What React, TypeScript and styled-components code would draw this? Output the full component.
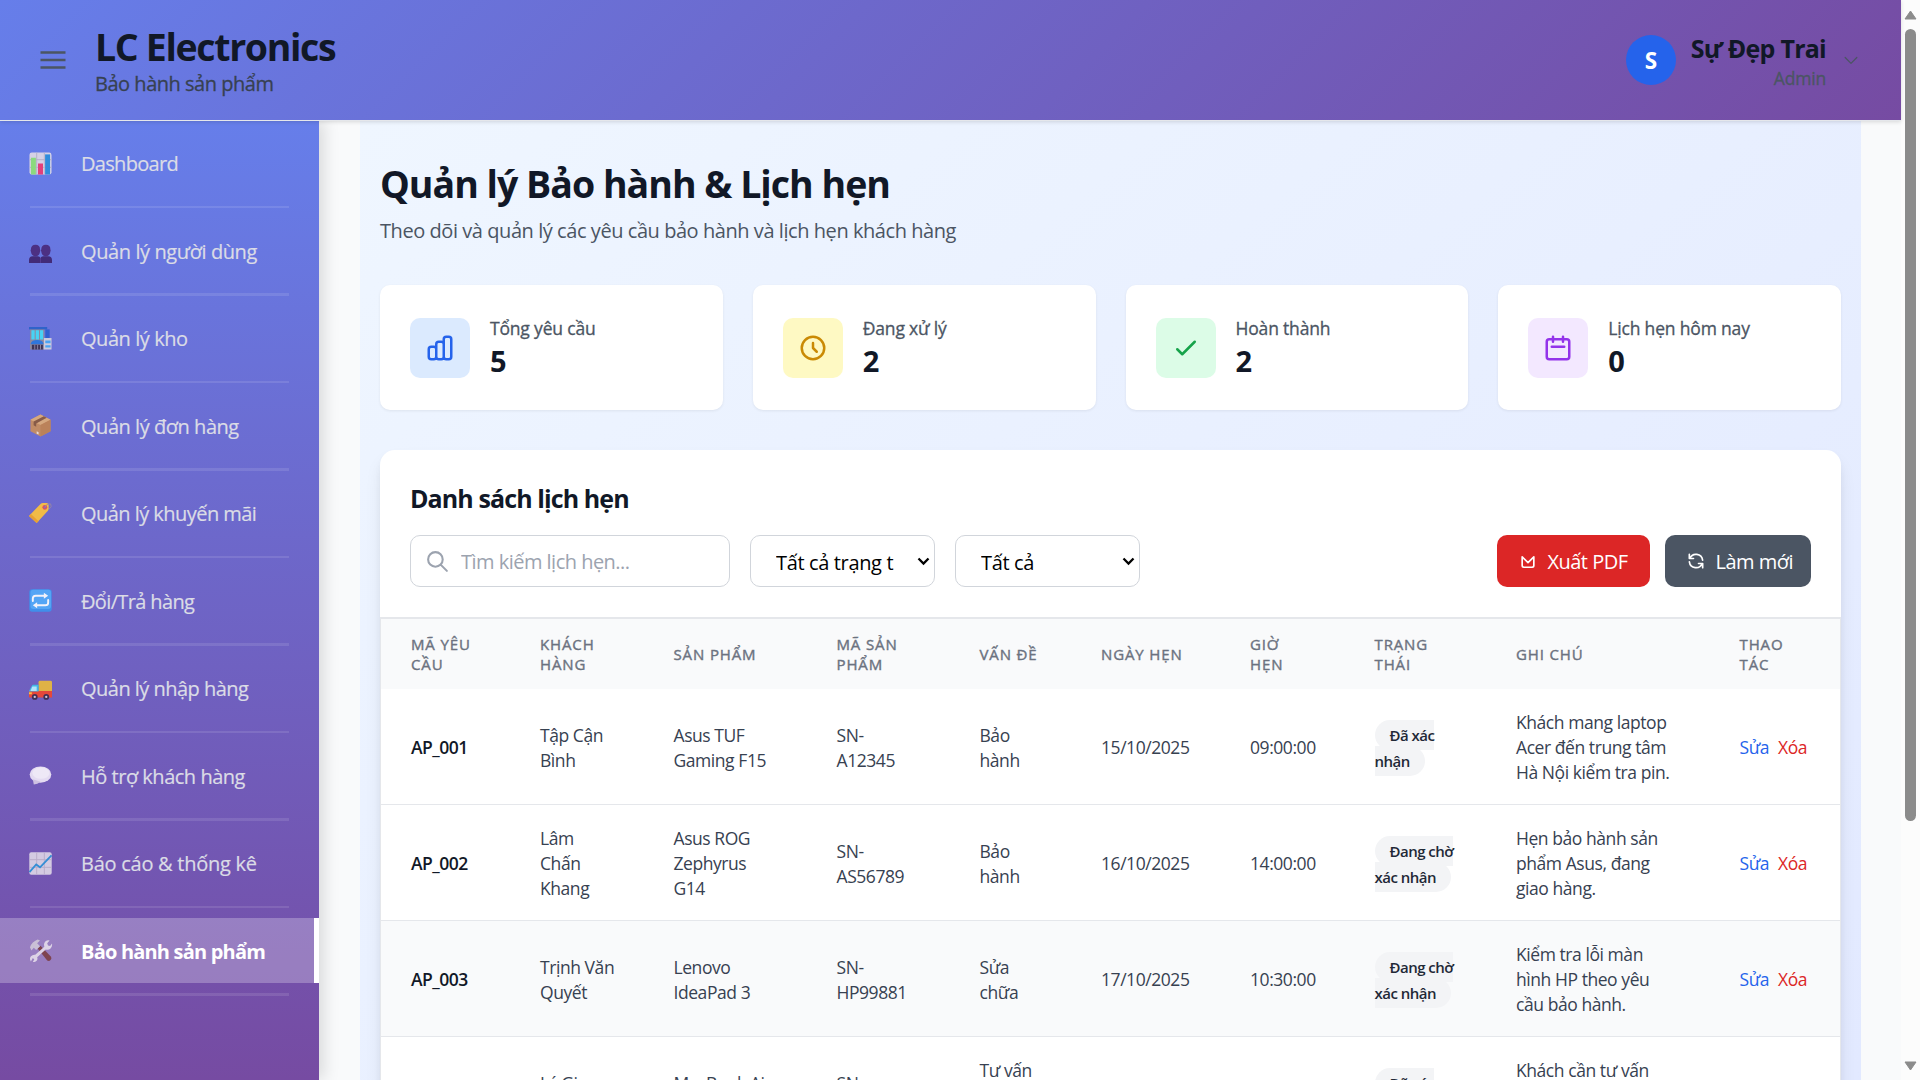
import React from "react";
import styled, { createGlobalStyle, css } from "styled-components";

const GlobalStyle = createGlobalStyle`
  *, *::before, *::after { box-sizing: border-box; }
  html, body { margin: 0; padding: 0; height: 1080px; overflow: hidden; }
  body {
    font-family: "Segoe UI", "Open Sans", "Noto Sans", sans-serif;
    font-size: 20px;
    line-height: 30px;
    letter-spacing: -0.022em;
    color: #111827;
    background: #f9fafb;
  }
  h1, h2, p { margin: 0; }
  button, input { font: inherit; letter-spacing: inherit; }
`;

const medium = css`
  font-weight: 400;
  -webkit-text-stroke: 0.3px currentColor;
`;

/* ---------- shell ---------- */

const Screen = styled.div`
  display: flex;
  width: 1920px;
  height: 1080px;
  overflow: hidden;
`;

const Page = styled.div`
  display: flex;
  flex-direction: column;
  flex: 1;
  min-width: 0;
`;

const Body = styled.div`
  display: flex;
  flex: 1;
  min-height: 0;
`;

const ScrollTrack = styled.div`
  display: flex;
  flex-direction: column;
  align-items: center;
  width: 19px;
  padding: 10px 0 9px;
  background: #fcfcfc;
`;

const ScrollThumb = styled.div`
  width: 11px;
  height: 792px;
  margin: 9px 0 auto;
  border-radius: 6px;
  background: #8b8b8b;
`;

/* ---------- header ---------- */

const Header = styled.header`
  display: flex;
  align-items: center;
  flex: none;
  height: 121px;
  padding: 0 40px 0 37.5px;
  background: linear-gradient(135deg, #667eea 0%, #764ba2 100%);
  border-bottom: 1px solid #e5e7eb;
  box-shadow: 0 1px 4px rgba(0, 0, 0, 0.14);
  position: relative;
  z-index: 2;
`;

const MenuButton = styled.button`
  display: flex;
  padding: 0;
  margin-right: 27.5px;
  border: 0;
  background: none;
  color: #4b5563;
`;

const Brand = styled.div`
  flex: 1;
  padding-top: 3px;
`;

const BrandName = styled.h1`
  font-size: 37.5px;
  line-height: 45px;
  font-weight: 700;
  letter-spacing: -0.036em;
`;

const BrandSub = styled.p`
  ${medium}
  color: #374151;
  letter-spacing: -0.024em;
`;

const User = styled.div`
  display: flex;
  align-items: center;
  color: #4b5563;
`;

const Avatar = styled.div`
  display: flex;
  align-items: center;
  justify-content: center;
  width: 50px;
  height: 50px;
  padding-top: 1px;
  margin-right: 15px;
  border-radius: 50%;
  background: #2563eb;
  color: #fff;
  font-size: 22.5px;
  font-weight: 700;
`;

const UserText = styled.div`
  padding-top: 2px;
  margin-right: 15px;
  text-align: right;
`;

const UserName = styled.div`
  font-size: 25px;
  line-height: 35px;
  font-weight: 700;
  letter-spacing: -0.03em;
  color: #111827;
`;

const UserRole = styled.div`
  ${medium}
  font-size: 17.5px;
  line-height: 25px;
  letter-spacing: -0.01em;
`;

/* ---------- sidebar ---------- */

const Sidebar = styled.nav`
  flex: none;
  width: 319px;
  padding-top: 9.5px;
  background: linear-gradient(180deg, #667eea 0%, #764ba2 100%);
  box-shadow: 5px 0 15px rgba(0, 0, 0, 0.13);
  position: relative;
  z-index: 1;
`;

const NavItem = styled.a<{ $active?: boolean; $tracking: number }>`
  display: grid;
  grid-template-columns: 52px 1fr;
  align-items: center;
  height: 65px;
  padding-left: 29px;
  border-right: 5px solid ${(p) => (p.$active ? "#fff" : "transparent")};
  background: ${(p) => (p.$active ? "rgba(255, 255, 255, 0.26)" : "none")};
  background-clip: padding-box;
  color: ${(p) => (p.$active ? "#fff" : "#dbdce6")};
  font-weight: ${(p) => (p.$active ? 700 : 400)};
  letter-spacing: ${(p) => p.$tracking}em;
  -webkit-text-stroke: ${(p) => (p.$active ? "0" : "0.2px currentColor")};
  white-space: nowrap;
`;

const NavLabel = styled.span`
  padding-top: 2px;
`;

const NavRule = styled.div`
  height: 2.5px;
  margin: 10px 30px;
  background: rgba(255, 255, 255, 0.11);
`;

const NavGlyph = styled.svg`
  width: 23px;
  height: 23px;
  opacity: 0.92;
  overflow: visible;
`;

/* ---------- content ---------- */

const Main = styled.main`
  flex: 1;
  min-width: 0;
  padding: 0 40px 0 41px;
`;

const Canvas = styled.div`
  height: 1290px;
  padding: 40px 20px;
  background: linear-gradient(to bottom right, #eff6ff, #e0e7ff);
`;

const PageTitle = styled.h1`
  font-size: 37.5px;
  line-height: 45px;
  font-weight: 700;
  letter-spacing: -0.0265em;
`;

const PageSub = styled.p`
  margin: 10px 0 39px;
  color: #4b5563;
`;

const Stats = styled.div`
  display: grid;
  grid-template-columns: repeat(4, 1fr);
  gap: 30px;
`;

const StatCard = styled.section`
  display: flex;
  align-items: center;
  gap: 20px;
  height: 125px;
  padding: 0 30px;
  border-radius: 10px;
  background: #fff;
  box-shadow: 0 1px 3px rgba(0, 0, 0, 0.07);
`;

const StatIcon = styled.div<{ $bg: string; $fg: string }>`
  display: flex;
  align-items: center;
  justify-content: center;
  width: 60px;
  height: 60px;
  border-radius: 10px;
  background: ${(p) => p.$bg};
  color: ${(p) => p.$fg};
`;

const StatText = styled.div`
  padding-top: 2px;
`;

const StatLabel = styled.div`
  ${medium}
  font-size: 17.5px;
  line-height: 25px;
  letter-spacing: -0.01em;
  color: #4b5563;
`;

const StatValue = styled.div`
  font-size: 29px;
  line-height: 40px;
  font-weight: 700;
`;

const Panel = styled.section`
  margin-top: 40px;
  border-radius: 15px;
  background: #fff;
  box-shadow: 0 10px 18px -3px rgba(0, 0, 0, 0.1), 0 4px 8px -3px rgba(0, 0, 0, 0.08);
`;

const PanelHead = styled.div`
  padding: 31px 30px 30px;
`;

const PanelTitle = styled.h2`
  font-size: 25px;
  line-height: 35px;
  font-weight: 700;
  letter-spacing: -0.036em;
`;

const Toolbar = styled.div`
  display: flex;
  gap: 20px;
  margin-top: 19px;
`;

const field = css`
  display: flex;
  align-items: center;
  height: 52px;
  border: 1px solid #d1d5db;
  border-radius: 10px;
  background: #fff;
`;

const SearchField = styled.label`
  ${field}
  width: 320px;
  padding-left: 14px;
  gap: 11px;
  color: #9ca3af;
`;

const SearchInput = styled.input`
  flex: 1;
  min-width: 0;
  padding: 2px 0 0;
  border: 0;
  outline: 0;
  background: none;
  letter-spacing: -0.026em;
  &::placeholder { color: #9ca3af; opacity: 1; }
`;

const SelectField = styled.div`
  ${field}
  width: 185px;
  padding: 0 4px 0 25px;
  color: #000;
  justify-content: space-between;
`;

const SelectValue = styled.span`
  width: 120px;
  padding-top: 4px;
  overflow: hidden;
  letter-spacing: -0.018em;
  white-space: nowrap;
`;

const Actions = styled.div`
  display: flex;
  gap: 15px;
  margin-left: auto;
`;

const ActionButton = styled.button<{ $bg: string; $w: number }>`
  display: flex;
  align-items: center;
  gap: 10px;
  width: ${(p) => p.$w}px;
  height: 52px;
  padding: 0 0 0 20.5px;
  border: 0;
  border-radius: 10px;
  background: ${(p) => p.$bg};
  color: #fff;
  white-space: nowrap;
`;

const ActionLabel = styled.span`
  padding-top: 2px;
  letter-spacing: -0.026em;
`;

/* ---------- table ---------- */

const TableFrame = styled.div`
  border: 1px solid #e5e7eb;
  border-top-width: 2px;
`;

const Table = styled.table`
  width: 100%;
  table-layout: fixed;
  border-collapse: separate;
  border-spacing: 0;
`;

const Th = styled.th`
  height: 70px;
  padding: 15px 0 15px 30px;
  background: #f9fafb;
  color: #6b7280;
  font-size: 15px;
  line-height: 20px;
  font-weight: 400;
  -webkit-text-stroke: 0.4px currentColor;
  letter-spacing: 0.058em;
  text-align: left;
  text-transform: uppercase;
  white-space: pre-line;
`;

const Tr = styled.tr<{ $shaded?: boolean }>`
  background: ${(p) => (p.$shaded ? "#f9fafb" : "#fff")};
`;

const Td = styled.td<{ $strong?: boolean }>`
  height: 116px;
  padding: 21px 0 19px 30px;
  border-bottom: 1px solid #e5e7eb;
  font-size: 17.5px;
  line-height: 25px;
  color: ${(p) => (p.$strong ? "#111827" : "#374151")};
  font-weight: ${(p) => (p.$strong ? 600 : 400)};
  letter-spacing: ${(p) => (p.$strong ? "-0.028em" : "-0.025em")};
  white-space: pre-line;
`;

const Badge = styled.span`
  padding: 5px 15px;
  border-radius: 999px;
  background: #f3f4f6;
  color: #1f2937;
  font-size: 15px;
  font-weight: 600;
  letter-spacing: -0.035em;
`;

const RowLink = styled.a<{ $danger?: boolean }>`
  margin-right: 9px;
  color: ${(p) => (p.$danger ? "#dc2626" : "#2563eb")};
`;

/* ---------- data ---------- */

type Glyph = "chart" | "people" | "store" | "box" | "tag" | "repeat" | "truck" | "chat" | "trend" | "tools";

const nav: { glyph: Glyph; label: string; tracking: number; active?: boolean }[] = [
  { glyph: "chart", label: "Dashboard", tracking: -0.034 },
  { glyph: "people", label: "Quản lý người dùng", tracking: -0.02 },
  { glyph: "store", label: "Quản lý kho", tracking: -0.022 },
  { glyph: "box", label: "Quản lý đơn hàng", tracking: -0.023 },
  { glyph: "tag", label: "Quản lý khuyến mãi", tracking: -0.027 },
  { glyph: "repeat", label: "Đổi/Trả hàng", tracking: -0.032 },
  { glyph: "truck", label: "Quản lý nhập hàng", tracking: -0.026 },
  { glyph: "chat", label: "Hỗ trợ khách hàng", tracking: -0.024 },
  { glyph: "trend", label: "Báo cáo & thống kê", tracking: -0.013 },
  { glyph: "tools", label: "Bảo hành sản phẩm", tracking: -0.04, active: true },
];

const stats = [
  { label: "Tổng yêu cầu", value: 5, bg: "#dbeafe", fg: "#2563eb", d: "M9 19v-6a2 2 0 00-2-2H5a2 2 0 00-2 2v6a2 2 0 002 2h2a2 2 0 002-2zm0 0V9a2 2 0 012-2h2a2 2 0 012 2v10m-6 0a2 2 0 002 2h2a2 2 0 002-2m0 0V5a2 2 0 012-2h2a2 2 0 012 2v14a2 2 0 01-2 2h-2a2 2 0 01-2-2z" },
  { label: "Đang xử lý", value: 2, bg: "#fef9c3", fg: "#ca8a04", d: "M12 8v4l3 3m6-3a9 9 0 11-18 0 9 9 0 0118 0z" },
  { label: "Hoàn thành", value: 2, bg: "#dcfce7", fg: "#16a34a", d: "M5 13l4 4L19 7" },
  { label: "Lịch hẹn hôm nay", value: 0, bg: "#f3e8ff", fg: "#9333ea", d: "M8 7V3m8 4V3m-9 8h10M5 21h14a2 2 0 002-2V7a2 2 0 00-2-2H5a2 2 0 00-2 2v12a2 2 0 002 2z" },
];

const columns: [string, number][] = [
  ["Mã yêu\ncầu", 129],
  ["Khách\nhàng", 133.5],
  ["Sản phẩm", 163],
  ["Mã sản\nphẩm", 143],
  ["Vấn đề", 121.5],
  ["Ngày hẹn", 149],
  ["Giờ\nhẹn", 124.5],
  ["Trạng\nthái", 141.5],
  ["Ghi chú", 223.5],
  ["Thao\ntác", 130.5],
];

const rows = [
  { id: "AP_001", who: "Tập Cận\nBình", product: "Asus TUF\nGaming F15", serial: "SN-\nA12345", issue: "Bảo\nhành", date: "15/10/2025", time: "09:00:00", status: "Đã xác\nnhận", note: "Khách mang laptop\nAcer đến trung tâm\nHà Nội kiểm tra pin." },
  { id: "AP_002", who: "Lâm\nChấn\nKhang", product: "Asus ROG\nZephyrus\nG14", serial: "SN-\nAS56789", issue: "Bảo\nhành", date: "16/10/2025", time: "14:00:00", status: "Đang chờ\nxác nhận", note: "Hẹn bảo hành sản\nphẩm Asus, đang\ngiao hàng." },
  { id: "AP_003", who: "Trịnh Văn\nQuyết", product: "Lenovo\nIdeaPad 3", serial: "SN-\nHP99881", issue: "Sửa\nchữa", date: "17/10/2025", time: "10:30:00", status: "Đang chờ\nxác nhận", note: "Kiểm tra lỗi màn\nhình HP theo yêu\ncầu bảo hành.", shaded: true },
  { id: "AP_004", who: "Lý Gia\nThành", product: "MacBook Air\nM2", serial: "SN-\nMB22334", issue: "Tư vấn\nsản\nphẩm", date: "18/10/2025", time: "15:00:00", status: "Đã xác\nnhận", note: "Khách cần tư vấn\nnâng cấp bộ\nnhớ." },
];

/* ---------- drawings ---------- */

function LineIcon({ d, size, weight = 2 }: { d: string; size: number; weight?: number }) {
  return (
    <svg width={size} height={size} viewBox="0 0 24 24" fill="none" stroke="currentColor" strokeWidth={weight} strokeLinecap="round" strokeLinejoin="round">
      <path d={d} />
    </svg>
  );
}

const glyphs: Record<Glyph, React.ReactNode> = {
  chart: (
    <>
      <rect x="0.5" y="0.5" width="23" height="23" rx="2.5" fill="#e0d9e6" />
      <path d="M8 .5v23M16 .5v23M.5 8h23M.5 16h23" stroke="#bcb4c6" strokeWidth="1" />
      <rect x="2" y="6" width="5.2" height="17.5" fill="#8fe276" />
      <rect x="9.4" y="12" width="5.2" height="11.5" fill="#ed3a72" />
      <rect x="16.8" y="2.5" width="5.2" height="21" fill="#2b8fdc" />
    </>
  ),
  people: (
    <g fill="#4a2b7c" transform="translate(0 3)">
      <path d="M2 8q0-5 4.8-5T11.5 8q.6 1 0 2-.6 5-4.7 5T2 10q-.6-1 0-2z" />
      <path d="M12.8 8q0-5 4.8-5t4.7 5q.6 1 0 2-.6 5-4.7 5t-4.8-5q-.6-1 0-2z" />
      <path d="M0 22v-3q0-4 4-4h5q3 0 3 3 0-3 3-3h5q4 0 4 4v3z" fill="#3f2570" />
      <path d="M12 17v5" stroke="#5b3c93" strokeWidth=".8" />
    </g>
  ),
  store: (
    <>
      <rect x="1" y="1" width="15" height="22.5" fill="#8f8a9c" />
      <path d="M0 0h19v2.5H0z" fill="#2b62c9" />
      <path d="M2.5 3.5h3.4V13H2.5zM7 3.5h3.4V13H7zM11.5 3.5h3.3V13h-3.3z" fill="#45dcf7" />
      <path d="M17 2.5h4.5v9H17z" fill="#2c5fd0" />
      <path d="M1.5 18q1-4.5 7-4.5t7 4.5z" fill="#2a77dd" />
      <path d="M3 18.5h11.5v5H3z" fill="#3a2f4e" />
      <path d="M6 18.5v5M9 18.5v5M12 18.5v5" stroke="#9a93a8" strokeWidth=".9" />
      <rect x="15.5" y="11.5" width="8" height="12" fill="#d6d2de" />
      <path d="M17 14h5.5v3H17zM17 19h5.5v2.5H17z" fill="#49a9f5" />
    </>
  ),
  box: (
    <>
      <path d="M12 .5l10.500 5.500v12L12 23.500 1.500 18V6z" fill="#c98f5d" />
      <path d="M12 .5L22.500 6 12 11.500 1.500 6z" fill="#dfad78" />
      <path d="M12 11.500L22.500 6v12L12 23.500z" fill="#c28450" />
      <path d="M15.500 2.300l3 1.600-11 6v3.300L4.800 11.700V7.900z" fill="#8a5a3d" />
      <path d="M8 18l2 1v2.500l-2-1z" fill="#f3e3d6" />
    </>
  ),
  tag: (
    <>
      <path d="M0 14.500L12 2q1-1 2.500-1h4q2 0 2 2v4q0 1.500-1 2.500L8 22z" fill="#fdc23c" />
      <path d="M0 14.500L8 22l2-2-8-7.500z" fill="#f2a529" />
      <circle cx="16.500" cy="5.600" r="2.500" fill="#e2545a" />
      <circle cx="16.500" cy="5.600" r="1" fill="#7a6bd0" />
      <path d="M16.500 5.500q2-4.500 6-3.500 2 2.500-1.500 5.500" fill="none" stroke="#9a8aa0" strokeWidth="1" />
    </>
  ),
  repeat: (
    <>
      <rect x=".3" y=".3" width="23.400" height="23.400" rx="3" fill="#3d93ee" />
      <rect x="1.500" y=".8" width="21.500" height="20" rx="3" fill="#52abfa" />
      <path d="M4 12.500V10q0-3 3-3h9.500M20 11.500V14q0 3-3 3H7.500" fill="none" stroke="#fff" strokeWidth="2" strokeLinecap="round" />
      <path d="M15.500 3.800L20 7l-4.500 3.200zM8.500 13.800L4 17l4.500 3.200z" fill="#fff" />
    </>
  ),
  truck: (
    <g transform="translate(0 1.500)">
      <rect x="10" y="2.500" width="14" height="12.500" rx="1.500" fill="#e9b93c" />
      <path d="M0 19v-6l3-5.500q.5-1 1.500-1H10V19z" fill="#3fc0ea" />
      <path d="M3.500 8.500H8V13H1.500z" fill="#b8f0ff" />
      <path d="M0 13.500h10V13h14v7H1q-1 0-1-1z" fill="#f0452f" />
      <path d="M0 14.500h3v2H0z" fill="#ffc83d" />
      <circle cx="6" cy="19.300" r="3" fill="#3a2b4c" />
      <circle cx="18" cy="19.300" r="3" fill="#3a2b4c" />
      <circle cx="6" cy="19.300" r="1.200" fill="#d8d0e0" />
      <circle cx="18" cy="19.300" r="1.200" fill="#d8d0e0" />
    </g>
  ),
  chat: (
    <g transform="translate(0 1)">
      <ellipse cx="12" cy="10" rx="11.300" ry="8.500" fill="#eee6f6" />
      <path d="M4 15l1 5.500q4-.5 7-3z" fill="#d6cae6" />
      <ellipse cx="12.500" cy="8.500" rx="9" ry="6" fill="#f9f5fc" />
    </g>
  ),
  trend: (
    <>
      <rect x=".3" y=".3" width="23.400" height="23.400" rx="2" fill="#ddd5e6" />
      <path d="M8 .5v23M16 .5v23M.5 8h23M.5 16h23" stroke="#bfb5cc" strokeWidth="1" />
      <path d="M.5 21l7-8 4 3L23.500 3.500" fill="none" stroke="#2f93d8" strokeWidth="1.900" />
    </>
  ),
  tools: (
    <>
      <path d="M9 10l3-3 11 11.500q1 2-.5 3.500t-3.500.5z" fill="#7c3f46" />
      <path d="M1 8.500Q3 3 9 .5l2.500 1L8.500 4.500l3 3-4 4-2.500-2.500L2.500 12z" fill="#cfc6d8" />
      <path d="M2 23.500q-2-3 0-5.500 2-2 4.500-1.500L16 8q-1-3.500 1-5.500 2-1.500 4.500-1L19 4.500l.8 2.200L22 7.300l2-2.500q.5 3-1.500 5T17.500 11L8.500 19q1 2.500-.8 4t-3.700.7l1.500-2.400-1.500-1.500z" fill="#e3dbea" />
    </>
  ),
};

function Caret() {
  return (
    <svg width="13" height="10" viewBox="0 0 13 10" fill="none" stroke="#000" strokeWidth="2.300">
      <path d="M1.500 2.500l5 5 5-5" />
    </svg>
  );
}

export default function App() {
  return (
    <Screen>
      <GlobalStyle />
      <Page>
        <Header>
          <MenuButton aria-label="Menu">
            <svg width="30" height="30" viewBox="0 0 24 24" stroke="currentColor" strokeWidth="2">
              <path d="M2 6h20M2 12h20M2 18h20" />
            </svg>
          </MenuButton>
          <Brand>
            <BrandName>LC Electronics</BrandName>
            <BrandSub>Bảo hành sản phẩm</BrandSub>
          </Brand>
          <User>
            <Avatar>S</Avatar>
            <UserText>
              <UserName>Sự Đẹp Trai</UserName>
              <UserRole>Admin</UserRole>
            </UserText>
            <LineIcon d="M19 9l-7 7-7-7" size={20} weight={1.5} />
          </User>
        </Header>
        <Body>
          <Sidebar>
            {nav.map((item) => (
              <React.Fragment key={item.glyph}>
                <NavItem $active={item.active} $tracking={item.tracking}>
                  <NavGlyph viewBox="0 0 24 24">{glyphs[item.glyph]}</NavGlyph>
                  <NavLabel>{item.label}</NavLabel>
                </NavItem>
                <NavRule />
              </React.Fragment>
            ))}
          </Sidebar>
          <Main>
            <Canvas>
              <PageTitle>Quản lý Bảo hành &amp; Lịch hẹn</PageTitle>
              <PageSub>Theo dõi và quản lý các yêu cầu bảo hành và lịch hẹn khách hàng</PageSub>
              <Stats>
                {stats.map((s) => (
                  <StatCard key={s.label}>
                    <StatIcon $bg={s.bg} $fg={s.fg}>
                      <LineIcon d={s.d} size={30} />
                    </StatIcon>
                    <StatText>
                      <StatLabel>{s.label}</StatLabel>
                      <StatValue>{s.value}</StatValue>
                    </StatText>
                  </StatCard>
                ))}
              </Stats>
              <Panel>
                <PanelHead>
                  <PanelTitle>Danh sách lịch hẹn</PanelTitle>
                  <Toolbar>
                    <SearchField>
                      <LineIcon d="M21 21l-6-6m2-5a7 7 0 11-14 0 7 7 0 0114 0z" size={25} />
                      <SearchInput placeholder="Tìm kiếm lịch hẹn..." />
                    </SearchField>
                    <SelectField>
                      <SelectValue>Tất cả trạng t</SelectValue>
                      <Caret />
                    </SelectField>
                    <SelectField>
                      <SelectValue>Tất cả</SelectValue>
                      <Caret />
                    </SelectField>
                    <Actions>
                      <ActionButton $bg="#dc2626" $w={153}>
                        <LineIcon d="M5 7v10.500a2 2 0 002 2h10a2 2 0 002-2V7l-7 7-7-7z" size={20} />
                        <ActionLabel>Xuất PDF</ActionLabel>
                      </ActionButton>
                      <ActionButton $bg="#4b5563" $w={146}>
                        <LineIcon d="M4 4v5h.582m15.356 2A8.001 8.001 0 004.582 9m0 0H9m11 11v-5h-.581m0 0a8.003 8.003 0 01-15.357-2m15.357 2H15" size={20} />
                        <ActionLabel>Làm mới</ActionLabel>
                      </ActionButton>
                    </Actions>
                  </Toolbar>
                </PanelHead>
                <TableFrame>
                  <Table>
                    <colgroup>
                      {columns.map(([name, width]) => (
                        <col key={name} width={width} />
                      ))}
                    </colgroup>
                    <thead>
                      <tr>
                        {columns.map(([name]) => (
                          <Th key={name}>{name}</Th>
                        ))}
                      </tr>
                    </thead>
                    <tbody>
                      {rows.map((r) => (
                        <Tr key={r.id} $shaded={r.shaded}>
                          <Td $strong>{r.id}</Td>
                          <Td>{r.who}</Td>
                          <Td>{r.product}</Td>
                          <Td>{r.serial}</Td>
                          <Td>{r.issue}</Td>
                          <Td>{r.date}</Td>
                          <Td>{r.time}</Td>
                          <Td>
                            <Badge>{r.status}</Badge>
                          </Td>
                          <Td>{r.note}</Td>
                          <Td>
                            <RowLink>Sửa</RowLink>
                            <RowLink $danger>Xóa</RowLink>
                          </Td>
                        </Tr>
                      ))}
                    </tbody>
                  </Table>
                </TableFrame>
              </Panel>
            </Canvas>
          </Main>
        </Body>
      </Page>
      <ScrollTrack>
        <svg width="13" height="10" viewBox="0 0 13 10">
          <path d="M6.500 1L12 9H1z" fill="#8b8b8b" stroke="#8b8b8b" strokeLinejoin="round" />
        </svg>
        <ScrollThumb />
        <svg width="13" height="10" viewBox="0 0 13 10">
          <path d="M6.500 9L1 1h11z" fill="#8b8b8b" stroke="#8b8b8b" strokeLinejoin="round" />
        </svg>
      </ScrollTrack>
    </Screen>
  );
}
